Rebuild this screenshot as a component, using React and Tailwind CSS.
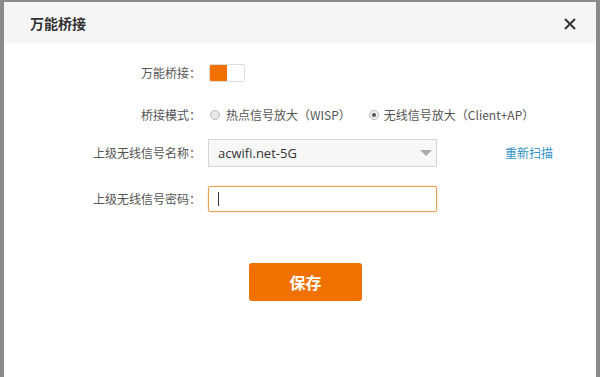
export default function App() {
  const font = { fontFamily: '"Noto Sans CJK SC", "Liberation Sans", sans-serif' };
  return (
    <div className="w-[600px] h-[377px] bg-[#8a8a8a] pl-[4px] pr-[4px] pt-[2px] overflow-hidden" style={font}>
      <div className="w-full h-full bg-white flex flex-col">
        <div className="h-[41px] bg-[#f5f5f5] flex items-center justify-between pl-[26px] pr-[20px] shrink-0">
          <span className="text-[14px] font-bold text-[#333] leading-none">万能桥接</span>
          <svg width="12" height="12" viewBox="0 0 12 12" className="mt-[3px]">
            <path d="M1 1 L11 11 M11 1 L1 11" stroke="#333" strokeWidth="2" />
          </svg>
        </div>

        <div className="flex items-center mt-[21px] h-[18px]">
          <div className="w-[197px] text-right text-[12px] text-[#555] leading-none">万能桥接：</div>
          <div className="ml-[8px] w-[36px] h-[18px] border border-[#ddd] rounded-[2px] flex overflow-hidden">
            <div className="w-[17px] h-full bg-[#f07000]" />
            <div className="flex-1 bg-white" />
          </div>
        </div>

        <div className="flex items-center mt-[24px] h-[18px]">
          <div className="w-[197px] text-right text-[12px] text-[#555] leading-none">桥接模式：</div>
          <div className="ml-[9px] flex items-center">
            <span className="w-[10px] h-[10px] rounded-full border border-[#bbb] bg-[#e8e8e8]" />
            <span className="ml-[6px] text-[12px] text-[#555] leading-none">热点信号放大（WISP）</span>
            <span className="ml-[18px] w-[10px] h-[10px] rounded-full border border-[#bbb] bg-[#f0f0f0] flex items-center justify-center">
              <span className="w-[4px] h-[4px] rounded-full bg-[#555]" />
            </span>
            <span className="ml-[5px] text-[12px] text-[#555] leading-none">无线信号放大（Client+AP）</span>
          </div>
        </div>

        <div className="flex items-center mt-[15px] h-[28px]">
          <div className="w-[197px] text-right text-[12px] text-[#555] leading-none">上级无线信号名称：</div>
          <div className="ml-[7px] w-[229px] h-[28px] border border-[#d5d5d5] bg-[#f7f7f7] flex items-center justify-between pl-[9px] pr-[4px]">
            <span className="text-[13px] text-[#333] leading-none" style={{ fontFamily: '"Open Sans", "Noto Sans", sans-serif' }}>acwifi.net-5G</span>
            <svg width="12" height="7" viewBox="0 0 12 7">
              <path d="M0 0 L12 0 L6 6 Z" fill="#aaa" />
            </svg>
          </div>
          <a className="ml-[68px] text-[12px] text-[#2f8fc4] leading-none">重新扫描</a>
        </div>

        <div className="flex items-center mt-[19px] h-[26px]">
          <div className="w-[197px] text-right text-[12px] text-[#555] leading-none">上级无线信号密码：</div>
          <div className="ml-[7px] w-[229px] h-[26px] border border-[#f0a050] rounded-[2px] bg-white flex items-center pl-[9px] shadow-[0_0_2px_rgba(240,130,40,0.4)]">
            <span className="w-px h-[14px] bg-[#333]" />
          </div>
        </div>

        <div className="flex mt-[51px]">
          <div className="w-[245px]" />
          <button className="w-[113px] h-[38px] bg-[#f07000] rounded-[3px] text-white text-[16px] font-bold leading-none flex items-center justify-center">
            保存
          </button>
        </div>
      </div>
    </div>
  );
}
